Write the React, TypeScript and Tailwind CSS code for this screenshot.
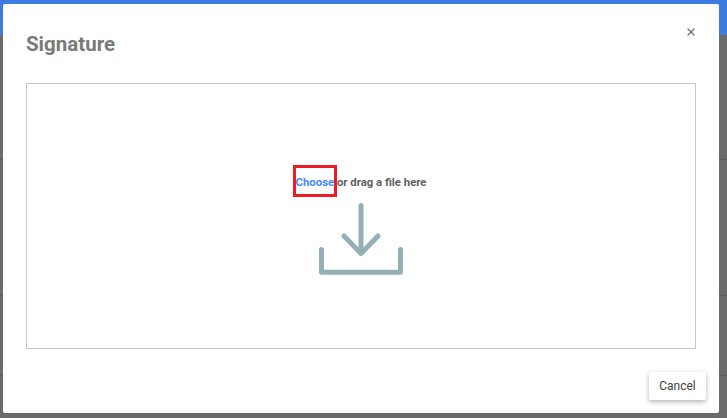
import React from "react";
import { X } from "lucide-react";

export default function App() {
  return (
    <div className="relative h-[418px] w-[727px] overflow-hidden bg-[#6b6b6b] font-['Roboto',sans-serif]">
      {/* Page behind the backdrop */}
      <div className="h-[35px] bg-[#3c7be0]" />
      <div className="h-[125px] border-b border-[#5c5c5c]" />
      <div className="h-[136px] border-b border-[#5c5c5c]" />
      <div className="h-[80px] border-b border-[#5c5c5c]" />

      {/* Dialog */}
      <div className="absolute left-[3px] top-[4px] flex h-[409px] w-[716px] flex-col rounded-[2px] bg-white px-[23px] pt-[24px]">
        <div className="flex items-start justify-between">
          <h2 className="text-[20.5px] font-bold leading-[32px] text-[#7a7a7a]">Signature</h2>
          <button className="mr-[-1px] mt-[-2px] text-[#707070]">
            <X size={12} strokeWidth={2.5} />
          </button>
        </div>

        {/* Drop zone */}
        <div className="mt-[23px] flex h-[266px] w-[670px] flex-col items-center border border-[#c8c8c8] pt-[90px]">
          <p className="text-[11.35px] font-bold leading-[16px] text-[#5f5f5f]">
            <span className="relative text-[#448aff]">
              Choose
              <span className="absolute left-[-3px] top-[-10px] h-[32px] w-[44px] border-[3px] border-[#ed1c24]" />
            </span>{" "}
            or drag a file here
          </p>
          <svg
            className="mt-[12px]"
            width="86"
            height="74"
            viewBox="0 0 86 74"
            fill="none"
            stroke="#95b0b5"
            strokeWidth="5"
            strokeLinecap="round"
            strokeLinejoin="round"
          >
            <path d="M43 3.500V51M26 34L43 51.500L60 34" />
            <path d="M3.500 47.500V70.300H82.500V47.500" />
          </svg>
        </div>

        <div className="mt-[23px] flex justify-end">
          <button className="mr-[-10px] h-[28px] w-[57px] rounded-[2px] bg-white text-[12px] text-[#424242] shadow-[0_2px_5px_rgba(0,0,0,0.3)]">
            Cancel
          </button>
        </div>
      </div>
    </div>
  );
}
